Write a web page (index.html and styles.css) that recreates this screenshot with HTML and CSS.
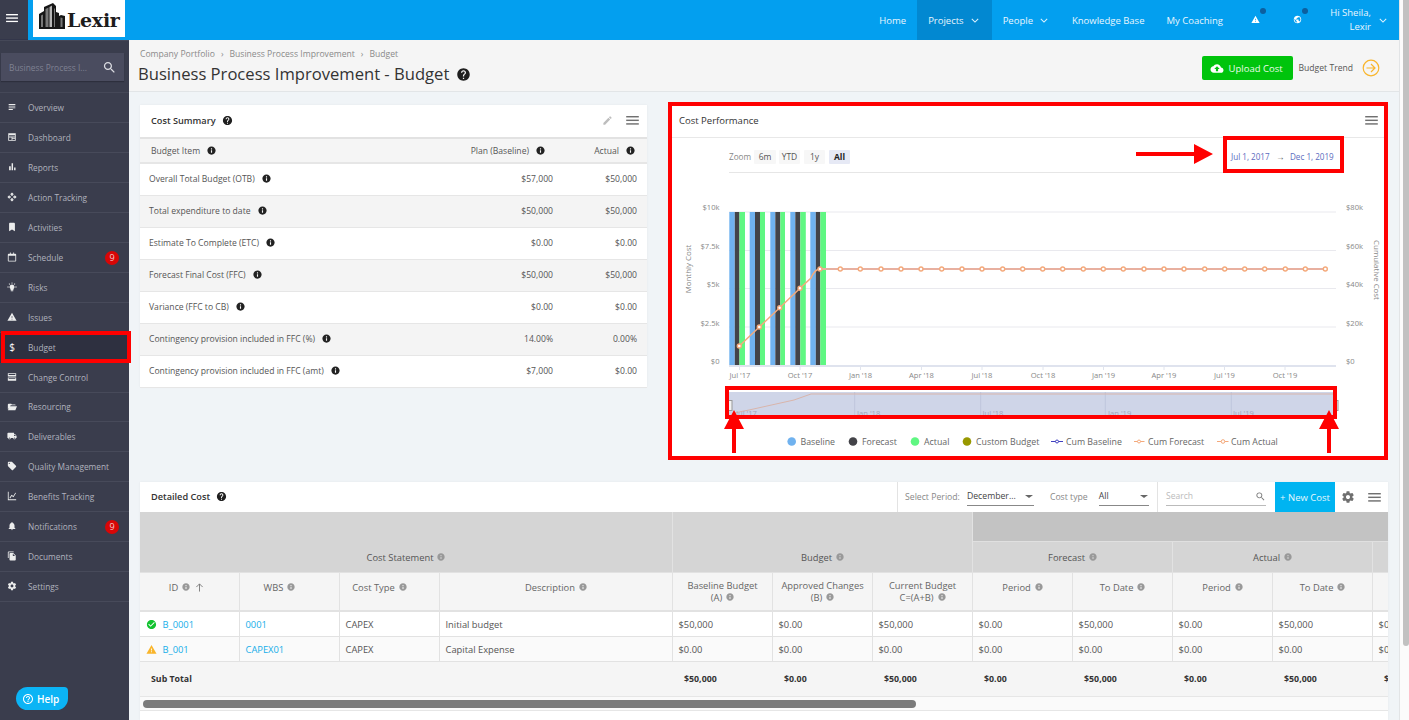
FILE: index.html
```html
<!DOCTYPE html>
<html lang="en">
<head>
<meta charset="utf-8">
<title>Business Process Improvement - Budget</title>
<link rel="stylesheet" href="styles.css">
</head>
<body>
<svg class="sprite" aria-hidden="true">
  <symbol id="i-menu" viewBox="0 0 14 10"><rect width="14" height="1.6" y="0"/><rect width="14" height="1.6" y="4"/><rect width="14" height="1.6" y="8"/></symbol>
  <symbol id="i-search" viewBox="0 0 24 24"><path d="M15.5 14h-.79l-.28-.27C15.41 12.59 16 11.11 16 9.5 16 5.91 13.09 3 9.5 3S3 5.91 3 9.5 5.91 16 9.5 16c1.61 0 3.09-.59 4.23-1.57l.27.28v.79l5 4.99L20.49 19l-4.99-5zm-6 0C7.01 14 5 11.99 5 9.5S7.01 5 9.5 5 14 7.01 14 9.5 11.99 14 9.5 14z"/></symbol>
  <symbol id="i-help" viewBox="0 0 24 24"><path d="M12 2C6.48 2 2 6.48 2 12s4.48 10 10 10 10-4.48 10-10S17.52 2 12 2zm1 17h-2v-2h2v2zm2.07-7.75l-.9.92C13.45 12.9 13 13.5 13 15h-2v-.5c0-1.1.45-2.1 1.17-2.83l1.24-1.26c.37-.36.59-.86.59-1.41 0-1.1-.9-2-2-2s-2 .9-2 2H8c0-2.21 1.79-4 4-4s4 1.79 4 4c0 .88-.36 1.68-.93 2.25z"/></symbol>
  <symbol id="i-help-o" viewBox="0 0 24 24"><path d="M11 18h2v-2h-2v2zm1-16C6.48 2 2 6.48 2 12s4.48 10 10 10 10-4.48 10-10S17.52 2 12 2zm0 18c-4.41 0-8-3.59-8-8s3.59-8 8-8 8 3.59 8 8-3.59 8-8 8zm0-14c-2.21 0-4 1.79-4 4h2c0-1.1.9-2 2-2s2 .9 2 2c0 2-3 1.75-3 5h2c0-2.25 3-2.5 3-5 0-2.21-1.79-4-4-4z"/></symbol>
  <symbol id="i-info" viewBox="0 0 24 24"><path d="M12 1C5.9 1 1 5.9 1 12s4.900 11 11 11 11-4.900 11-11S18.100 1 12 1zm1.500 17h-3v-7h3v7zm0-9h-3V6h3v3z"/></symbol>
  <symbol id="i-overview" viewBox="0 0 24 24"><path d="M14 17H4v2h10v-2zm6-8H4v2h16V9zM4 15h16v-2H4v2zM4 5v2h16V5H4z"/></symbol>
  <symbol id="i-dash" viewBox="0 0 24 24"><path d="M3 3h18v18H3V3zm2 5v3h14V8H5zm0 5v6h6v-6H5zm8 0v2h6v-2h-6zm0 4v2h6v-2h-6z" fill-rule="evenodd"/></symbol>
  <symbol id="i-bars" viewBox="0 0 24 24"><path d="M5 10h4v10H5zM11 3h3.500v17H11zM17 13h3.500v7H17z"/></symbol>
  <symbol id="i-move" viewBox="0 0 24 24"><path d="M10 9h4V6h3l-5-5-5 5h3v3zm-1 1H6V7l-5 5 5 5v-3h3v-4zm14 2l-5-5v3h-3v4h3v3l5-5zm-9 3h-4v3H7l5 5 5-5h-3v-3z"/></symbol>
  <symbol id="i-bookmark" viewBox="0 0 24 24"><path d="M17 2H7c-1.100 0-2 .9-2 2v18l7-4 7 4V4c0-1.100-.9-2-2-2z"/></symbol>
  <symbol id="i-cal" viewBox="0 0 24 24"><path d="M7 1h2v3h6V1h2v3h3c1 0 2 1 2 2v15c0 1-1 2-2 2H4c-1 0-2-1-2-2V6c0-1 1-2 2-2h3V1zM4 9v12h16V9H4z" fill-rule="evenodd"/></symbol>
  <symbol id="i-bulb" viewBox="0 0 24 24"><path d="M9 20h6v2H9zM11 1h2v3h-2zM1 11h3v2H1zM20 11h3v2h-3zM4 4.500L5.500 3l2.200 2.200-1.500 1.500zM16.300 5.200L18.500 3 20 4.500l-2.200 2.200zM12 6a6 6 0 0 1 3.500 10.900V19h-7v-2.100A6 6 0 0 1 12 6z"/></symbol>
  <symbol id="i-warn" viewBox="0 0 24 24"><path d="M1 21h22L12 2 1 21zm12-3h-2v-2h2v2zm0-4h-2v-4h2v4z"/></symbol>
  <symbol id="i-storage" viewBox="0 0 24 24"><path d="M2 3h20v8H2V3zm2 2v4h16V5H4zM2 13h20v8H2v-8zm2 2v4h16v-4H4zM4 9h16V7H4zM4 19h16v-2H4z" fill-rule="evenodd"/></symbol>
  <symbol id="i-folder" viewBox="0 0 24 24"><path d="M2 6c0-1.100.9-2 2-2h6l2 2h7c1.100 0 2 .9 2 2H9L2 18V6zM7 10h17l-4 10H2z"/></symbol>
  <symbol id="i-truck" viewBox="0 0 24 24"><path d="M20 8h-3V4H3c-1.100 0-2 .9-2 2v11h2c0 1.660 1.340 3 3 3s3-1.340 3-3h6c0 1.660 1.340 3 3 3s3-1.340 3-3h2v-5l-3-4zM6 18.500c-.83 0-1.500-.67-1.500-1.500s.67-1.500 1.500-1.500 1.500.67 1.500 1.500-.67 1.500-1.500 1.500zm13.500-9l1.960 2.500H17V9.500h2.500zm-1.500 9c-.83 0-1.500-.67-1.500-1.500s.67-1.500 1.500-1.500 1.500.67 1.500 1.500-.67 1.500-1.500 1.500z"/></symbol>
  <symbol id="i-tag" viewBox="0 0 24 24"><path d="M21.410 11.580l-9-9C12.050 2.220 11.550 2 11 2H4c-1.100 0-2 .9-2 2v7c0 .55.22 1.050.59 1.420l9 9c.36.36.86.58 1.410.58.55 0 1.050-.22 1.410-.59l7-7c.37-.36.59-.86.59-1.410 0-.55-.23-1.060-.59-1.420zM5.500 7C4.670 7 4 6.330 4 5.500S4.670 4 5.500 4 7 4.670 7 5.500 6.330 7 5.500 7z"/></symbol>
  <symbol id="i-trend" viewBox="0 0 24 24"><path d="M2 2h2v18h18v2H2V2zm4 14l5-7 4 3 5-8 1.700 1-6.200 10-4-3-4 6z"/></symbol>
  <symbol id="i-bell" viewBox="0 0 24 24"><path d="M12 22c1.100 0 2-.9 2-2h-4c0 1.100.9 2 2 2zm6-6v-5c0-3.070-1.630-5.640-4.500-6.320V4c0-.83-.67-1.500-1.500-1.500s-1.500.67-1.500 1.500v.68C7.640 5.360 6 7.920 6 11v5l-2 2v1h16v-1l-2-2z"/></symbol>
  <symbol id="i-docs" viewBox="0 0 24 24"><path d="M16 1H4c-1.100 0-2 .9-2 2v14h2V3h12V1zm-1 4l6 6v10c0 1.100-.9 2-2 2H7.990C6.890 23 6 22.100 6 21l.01-14c0-1.100.89-2 1.990-2h7zm-1 7h5.500L14 6.500V12z"/></symbol>
  <symbol id="i-gear" viewBox="0 0 24 24"><path d="M19.430 12.980c.04-.32.07-.64.07-.98s-.03-.66-.07-.98l2.110-1.650c.19-.15.24-.42.12-.64l-2-3.460c-.12-.22-.39-.3-.61-.22l-2.490 1c-.52-.4-1.080-.73-1.690-.98l-.38-2.650C14.460 2.180 14.250 2 14 2h-4c-.25 0-.46.18-.49.42l-.38 2.650c-.61.25-1.170.59-1.690.98l-2.490-1c-.23-.09-.49 0-.61.22l-2 3.460c-.13.22-.07.49.12.64l2.110 1.650c-.04.32-.07.65-.07.98s.03.66.07.98l-2.110 1.650c-.19.15-.24.42-.12.64l2 3.460c.12.22.39.3.61.22l2.490-1c.52.4 1.080.73 1.690.98l.38 2.650c.03.24.24.42.49.42h4c.25 0 .46-.18.49-.42l.38-2.650c.61-.25 1.170-.59 1.690-.98l2.490 1c.23.09.49 0 .61-.22l2-3.460c.12-.22.07-.49-.12-.64l-2.110-1.650zM12 15.500c-1.930 0-3.500-1.570-3.500-3.500s1.570-3.500 3.500-3.500 3.500 1.570 3.500 3.500-1.570 3.500-3.500 3.500z"/></symbol>
  <symbol id="i-globe" viewBox="0 0 24 24"><path d="M12 2C6.480 2 2 6.480 2 12s4.480 10 10 10 10-4.480 10-10S17.520 2 12 2zm-1 17.930c-3.950-.49-7-3.850-7-7.930 0-.62.08-1.210.21-1.790L9 15v1c0 1.100.9 2 2 2v1.930zm6.900-2.540c-.26-.81-1-1.390-1.900-1.390h-1v-3c0-.55-.45-1-1-1H8v-2h2c.55 0 1-.45 1-1V7h2c1.100 0 2-.9 2-2v-.41c2.930 1.190 5 4.060 5 7.410 0 2.080-.8 3.970-2.100 5.390z"/></symbol>
  <symbol id="i-cloud" viewBox="0 0 24 24"><path d="M19.350 10.040C18.670 6.590 15.640 4 12 4 9.110 4 6.600 5.640 5.350 8.040 2.340 8.360 0 10.910 0 14c0 3.310 2.690 6 6 6h13c2.760 0 5-2.240 5-5 0-2.640-2.050-4.780-4.650-4.960zM14 13v4h-4v-4H7l5-5 5 5h-3z"/></symbol>
  <symbol id="i-edit" viewBox="0 0 24 24"><path d="M3 17.250V21h3.750L17.810 9.940l-3.750-3.750L3 17.250zM20.710 7.040c.39-.39.39-1.020 0-1.410l-2.340-2.340c-.39-.39-1.020-.39-1.410 0l-1.830 1.830 3.750 3.750 1.830-1.830z"/></symbol>
  <symbol id="i-check" viewBox="0 0 24 24"><path d="M12 2C6.480 2 2 6.480 2 12s4.480 10 10 10 10-4.480 10-10S17.520 2 12 2zm-2 15l-5-5 1.410-1.410L10 14.170l7.590-7.590L19 8l-9 9z"/></symbol>
  <symbol id="i-chev" viewBox="0 0 10 6"><path d="M1 1l4 4 4-4" fill="none" stroke="currentColor" stroke-width="1.300"/></symbol>
  <symbol id="i-up" viewBox="0 0 10 10"><path d="M5 9.500V1M1.500 4.500L5 1l3.500 3.500" fill="none" stroke="currentColor" stroke-width="1"/></symbol>
</svg>

<div class="app">
  <div class="shell">
    <header class="topbar">
      <button class="burger" type="button" aria-label="Menu"><svg class="ic-burger"><use href="#i-menu"/></svg></button>
      <div class="logo">
        <svg class="logo-mark" viewBox="0 0 27 27" aria-hidden="true">
          <path class="lm-dark" d="M0 26V11l5-3V4l9-4 3 3v6l3 1v3l2-1 4 1v13z"/>
          <path class="lm-mid" d="M2 24V12.500l2-1V24zM6.500 24V6l3-1.500V24z"/>
          <path class="lm-light" d="M10.500 24V4l2.500-1.500V24z"/>
          <path class="lm-mid" d="M15 24V5l1 1v18zM21.500 24V14.500l2 .5v9z"/>
        </svg>
        <span class="logo-text">Lexir</span>
      </div>
      <nav class="topnav">
        <a class="tn">Home</a>
        <a class="tn tn-active">Projects<svg class="tn-chev"><use href="#i-chev"/></svg></a>
        <a class="tn tn-people">People<svg class="tn-chev"><use href="#i-chev"/></svg></a>
        <a class="tn">Knowledge Base</a>
        <a class="tn">My Coaching</a>
        <span class="tn-icon tn-icon-warn"><svg class="ic-top"><use href="#i-warn"/></svg><i class="dot"></i></span>
        <span class="tn-icon tn-icon-globe"><svg class="ic-top"><use href="#i-globe"/></svg><i class="dot"></i></span>
        <span class="user">Hi Sheila,<br>Lexir</span>
        <svg class="tn-chev user-chev"><use href="#i-chev"/></svg>
      </nav>
    </header>

    <div class="body">
      <aside class="sidebar">
        <div class="side-search">
          <div class="side-search-box"><span>Business Process I...</span><svg class="ic-side-search"><use href="#i-search"/></svg></div>
        </div>
        <ul class="side-nav">
          <li class="sn"><svg class="sn-ic"><use href="#i-overview"/></svg>Overview</li>
          <li class="sn"><svg class="sn-ic"><use href="#i-dash"/></svg>Dashboard</li>
          <li class="sn"><svg class="sn-ic"><use href="#i-bars"/></svg>Reports</li>
          <li class="sn"><svg class="sn-ic"><use href="#i-move"/></svg>Action Tracking</li>
          <li class="sn"><svg class="sn-ic"><use href="#i-bookmark"/></svg>Activities</li>
          <li class="sn"><svg class="sn-ic"><use href="#i-cal"/></svg>Schedule<span class="badge">9</span></li>
          <li class="sn"><svg class="sn-ic"><use href="#i-bulb"/></svg>Risks</li>
          <li class="sn"><svg class="sn-ic"><use href="#i-warn"/></svg>Issues</li>
          <li class="sn sn-active"><span class="sn-ic sn-dollar">$</span>Budget</li>
          <li class="sn"><svg class="sn-ic"><use href="#i-storage"/></svg>Change Control</li>
          <li class="sn sn-short"><svg class="sn-ic"><use href="#i-folder"/></svg>Resourcing</li>
          <li class="sn"><svg class="sn-ic"><use href="#i-truck"/></svg>Deliverables</li>
          <li class="sn"><svg class="sn-ic"><use href="#i-tag"/></svg>Quality Management</li>
          <li class="sn"><svg class="sn-ic"><use href="#i-trend"/></svg>Benefits Tracking</li>
          <li class="sn"><svg class="sn-ic"><use href="#i-bell"/></svg>Notifications<span class="badge">9</span></li>
          <li class="sn"><svg class="sn-ic"><use href="#i-docs"/></svg>Documents</li>
          <li class="sn"><svg class="sn-ic"><use href="#i-gear"/></svg>Settings</li>
        </ul>
        <button class="help" type="button"><svg class="ic-help"><use href="#i-help-o"/></svg>Help</button>
      </aside>

      <main class="main">
        <div class="pagebar">
          <div class="pagebar-left">
            <div class="crumbs"><span>Company Portfolio</span><b>›</b><span>Business Process Improvement</span><b>›</b><span>Budget</span></div>
            <h1 class="title">Business Process Improvement - Budget<svg class="ic-title"><use href="#i-help"/></svg></h1>
          </div>
          <div class="pagebar-right">
            <button class="upload" type="button"><svg class="ic-cloud"><use href="#i-cloud"/></svg>Upload Cost</button>
            <span class="trend">Budget Trend</span>
            <svg class="trend-arrow" viewBox="0 0 18 18"><circle cx="9" cy="9" r="7.800"/><path d="M4.500 9h8M9 5l4 4-4 4"/></svg>
          </div>
        </div>

        <div class="content">
          <div class="row-top">
            <section class="panel summary">
              <div class="panel-head">
                <span class="panel-title">Cost Summary</span><svg class="ic-q"><use href="#i-help"/></svg>
                <span class="spacer"></span>
                <svg class="ic-edit"><use href="#i-edit"/></svg>
                <svg class="ic-hamb"><use href="#i-menu"/></svg>
              </div>
              <table class="sum-table">
                <thead>
                  <tr><th class="sl">Budget Item<svg class="inf"><use href="#i-info"/></svg></th><th class="sr sr-plan">Plan (Baseline)<svg class="inf"><use href="#i-info"/></svg></th><th class="sr">Actual<svg class="inf"><use href="#i-info"/></svg></th></tr>
                </thead>
                <tbody>
                  <tr><td>Overall Total Budget (OTB)<svg class="inf"><use href="#i-info"/></svg></td><td class="num">$57,000</td><td class="num">$50,000</td></tr>
                  <tr><td>Total expenditure to date<svg class="inf"><use href="#i-info"/></svg></td><td class="num">$50,000</td><td class="num">$50,000</td></tr>
                  <tr><td>Estimate To Complete (ETC)<svg class="inf"><use href="#i-info"/></svg></td><td class="num">$0.00</td><td class="num">$0.00</td></tr>
                  <tr><td>Forecast Final Cost (FFC)<svg class="inf"><use href="#i-info"/></svg></td><td class="num">$50,000</td><td class="num">$50,000</td></tr>
                  <tr><td>Variance (FFC to CB)<svg class="inf"><use href="#i-info"/></svg></td><td class="num">$0.00</td><td class="num">$0.00</td></tr>
                  <tr><td>Contingency provision included in FFC (%)<svg class="inf"><use href="#i-info"/></svg></td><td class="num">14.00%</td><td class="num">0.00%</td></tr>
                  <tr><td>Contingency provision included in FFC (amt)<svg class="inf"><use href="#i-info"/></svg></td><td class="num">$7,000</td><td class="num">$0.00</td></tr>
                </tbody>
              </table>
            </section>

            <section class="panel perf">
              <div class="panel-head perf-head">
                <span class="panel-title perf-title">Cost Performance</span>
                <span class="spacer"></span>
                <svg class="ic-hamb"><use href="#i-menu"/></svg>
              </div>
              <svg class="chart" viewBox="673 138 712 318" width="712" height="318">
                <!-- range selector -->
                <text class="cx-zoom" x="730" y="160">Zoom</text>
                <rect class="rs" x="755" y="150" width="22" height="14" rx="1"/><text class="rs-t" x="766" y="160">6m</text>
                <rect class="rs" x="780" y="150" width="21" height="14" rx="1"/><text class="rs-t" x="790.500" y="160">YTD</text>
                <rect class="rs" x="805" y="150" width="21" height="14" rx="1"/><text class="rs-t" x="815.500" y="160">1y</text>
                <rect class="rs rs-on" x="830" y="150" width="21" height="14" rx="1"/><text class="rs-t rs-t-on" x="840.500" y="160">All</text>
                <line class="hr" x1="730" x2="1337" y1="172.500" y2="172.500"/>
                <text class="cx-date" x="1232" y="160">Jul 1, 2017</text>
                <text class="cx-arrow" x="1277" y="160">→</text>
                <text class="cx-date" x="1291" y="160">Dec 1, 2019</text>

                <!-- grid -->
                <g class="grid">
                  <line x1="730" x2="1337" y1="212" y2="212"/>
                  <line x1="730" x2="1337" y1="250.500" y2="250.500"/>
                  <line x1="730" x2="1337" y1="288.500" y2="288.500"/>
                  <line x1="730" x2="1337" y1="327" y2="327"/>
                </g>

                <!-- bars -->
                <g class="b-base"><rect x="730.300" y="212" width="5.500" height="154"/><rect x="750.700" y="212" width="5.300" height="154"/><rect x="771.300" y="212" width="5" height="154"/><rect x="791.300" y="212" width="5" height="154"/><rect x="811.300" y="212" width="5.500" height="154"/></g>
                <g class="b-fore"><rect x="735.800" y="212" width="4.700" height="154"/><rect x="756" y="212" width="5" height="154"/><rect x="776.300" y="212" width="5" height="154"/><rect x="796.300" y="212" width="5" height="154"/><rect x="816.800" y="212" width="4.500" height="154"/></g>
                <g class="b-act"><rect x="740.500" y="212" width="5.500" height="154"/><rect x="761" y="212" width="5" height="154"/><rect x="781.300" y="212" width="4.700" height="154"/><rect x="801.300" y="212" width="5.500" height="154"/><rect x="821.300" y="212" width="5.700" height="154"/></g>

                <line class="axis-line" x1="730" x2="1337" y1="366" y2="366"/>
                <g class="ticks">
                  <line x1="740.500" x2="740.500" y1="366" y2="370"/><line x1="801" x2="801" y1="366" y2="370"/><line x1="861.500" x2="861.500" y1="366" y2="370"/><line x1="922.500" x2="922.500" y1="366" y2="370"/><line x1="983" x2="983" y1="366" y2="370"/><line x1="1044" x2="1044" y1="366" y2="370"/><line x1="1104.500" x2="1104.500" y1="366" y2="370"/><line x1="1165" x2="1165" y1="366" y2="370"/><line x1="1225.500" x2="1225.500" y1="366" y2="370"/><line x1="1286" x2="1286" y1="366" y2="370"/>
                </g>

                <!-- lines -->
                <path class="l-cum" d="M740.300 346L760.300 327L780.700 307.700L801 288.300L812 278Q816 269 821 269H1326.300"/>
                <path class="l-flat" d="M821 269H1326.300"/>
                <g class="pts">
                  <circle cx="740.300" cy="346" r="2"/><circle cx="760.300" cy="327" r="2"/><circle cx="780.700" cy="307.700" r="2"/><circle cx="801" cy="288.300" r="2"/><circle cx="821" cy="269" r="2"/><circle cx="841.300" cy="269" r="2"/><circle cx="861.300" cy="269" r="2"/><circle cx="882" cy="269" r="2"/><circle cx="902" cy="269" r="2"/><circle cx="922" cy="269" r="2"/><circle cx="942.700" cy="269" r="2"/><circle cx="963" cy="269" r="2"/><circle cx="983" cy="269" r="2"/><circle cx="1003.700" cy="269" r="2"/><circle cx="1023.700" cy="269" r="2"/><circle cx="1043.700" cy="269" r="2"/><circle cx="1063.700" cy="269" r="2"/><circle cx="1084.300" cy="269" r="2"/><circle cx="1104.300" cy="269" r="2"/><circle cx="1124.300" cy="269" r="2"/><circle cx="1145" cy="269" r="2"/><circle cx="1165" cy="269" r="2"/><circle cx="1185" cy="269" r="2"/><circle cx="1205.700" cy="269" r="2"/><circle cx="1225.700" cy="269" r="2"/><circle cx="1245.700" cy="269" r="2"/><circle cx="1265.700" cy="269" r="2"/><circle cx="1286.300" cy="269" r="2"/><circle cx="1306.300" cy="269" r="2"/><circle cx="1326.300" cy="269" r="2"/>
                </g>

                <!-- axis labels -->
                <g class="ax ax-end">
                  <text x="720.500" y="210">$10k</text><text x="720.500" y="249">$7.5k</text><text x="720.500" y="287">$5k</text><text x="720.500" y="326">$2.5k</text><text x="720.500" y="364">$0</text>
                </g>
                <g class="ax">
                  <text x="1347" y="210">$80k</text><text x="1347" y="249">$60k</text><text x="1347" y="287">$40k</text><text x="1347" y="326">$20k</text><text x="1347" y="364">$0</text>
                </g>
                <g class="ax ax-mid">
                  <text x="741" y="378">Jul '17</text><text x="801" y="378">Oct '17</text><text x="861.500" y="378">Jan '18</text><text x="922.500" y="378">Apr '18</text><text x="983" y="378">Jul '18</text><text x="1044" y="378">Oct '18</text><text x="1104.500" y="378">Jan '19</text><text x="1165" y="378">Apr '19</text><text x="1225.500" y="378">Jul '19</text><text x="1286" y="378">Oct '19</text>
                </g>
                <text class="ax-title" transform="translate(691.500 269) rotate(-90)">Monthly Cost</text>
                <text class="ax-title" transform="translate(1375 270) rotate(90)">Cumulative Cost</text>

                <!-- navigator -->
                <rect class="nav-bg" x="730" y="392" width="607" height="25"/>
                <g class="nav-grid"><line x1="855.700" x2="855.700" y1="392" y2="417"/><line x1="981.700" x2="981.700" y1="392" y2="417"/><line x1="1106.300" x2="1106.300" y1="392" y2="417"/><line x1="1232.300" x2="1232.300" y1="392" y2="417"/></g>
                <path class="nav-line" d="M735 413L750 410L795 400L812 394H1337"/>
                <g class="ax nav-t"><text x="737" y="416">Jul '17</text><text x="858" y="416">Jan '18</text><text x="983.500" y="416">Jul '18</text><text x="1109" y="416">Jan '19</text><text x="1234" y="416">Jul '19</text></g>
                <rect class="nav-h" x="729.500" y="400.500" width="3.500" height="10"/>
                <rect class="nav-h" x="1335.500" y="400.500" width="3.500" height="10"/>

                <!-- legend -->
                <circle class="lg-base" cx="792.700" cy="441.500" r="4.300"/><text class="lg" x="801.500" y="445">Baseline</text>
                <circle class="lg-fore" cx="854" cy="441.500" r="4.300"/><text class="lg" x="863" y="445">Forecast</text>
                <circle class="lg-act" cx="916" cy="441.500" r="4.300"/><text class="lg" x="925" y="445">Actual</text>
                <circle class="lg-cust" cx="968" cy="441.500" r="4.300"/><text class="lg" x="977" y="445">Custom Budget</text>
                <line class="ll-blue" x1="1052" x2="1064" y1="441.500" y2="441.500"/><circle class="lm-blue" cx="1058" cy="441.500" r="1.500"/><text class="lg" x="1067" y="445">Cum Baseline</text>
                <line class="ll-org" x1="1135" x2="1145.500" y1="441.500" y2="441.500"/><circle class="lm-org" cx="1140" cy="441.500" r="1.500"/><text class="lg" x="1149" y="445">Cum Forecast</text>
                <line class="ll-org" x1="1218" x2="1229.500" y1="441.500" y2="441.500"/><circle class="lm-org" cx="1224" cy="441.500" r="1.800"/><text class="lg" x="1232" y="445">Cum Actual</text>

                <!-- annotations -->
                <g class="anno">
                  <rect x="1226" y="138" width="117" height="33"/>
                  <rect x="728" y="388" width="608" height="29"/>
                </g>
                <g class="anno-fill">
                  <path d="M1137 152h58v-8l19 10-19 10v-8h-58z"/>
                  <path d="M735 410l10 19h-8v24h-4v-24h-8z"/>
                  <path d="M1330 410l10 19h-8v24h-4v-24h-8z"/>
                </g>
              </svg>
            </section>
          </div>

          <section class="panel detail">
            <div class="detail-bar">
              <span class="panel-title detail-title">Detailed Cost</span><svg class="ic-q"><use href="#i-help"/></svg>
              <span class="spacer"></span>
              <div class="filters">
                <span class="f-label">Select Period:</span>
                <span class="f-select f-period">December...<i class="caret"></i></span>
                <span class="f-label f-label-2">Cost type</span>
                <span class="f-select f-type">All<i class="caret"></i></span>
              </div>
              <div class="d-search"><span class="d-search-in">Search<svg class="ic-d-search"><use href="#i-search"/></svg></span></div>
              <button class="newcost" type="button">+ New Cost</button>
              <svg class="ic-gear"><use href="#i-gear"/></svg>
              <svg class="ic-hamb ic-hamb-d"><use href="#i-menu"/></svg>
            </div>
            <div class="table-clip">
              <table class="dt">
                <colgroup>
                  <col class="c100"><col class="c100"><col class="c100"><col class="c233"><col class="c100"><col class="c100"><col class="c100"><col class="c100"><col class="c100"><col class="c100"><col class="c100"><col class="c100">
                </colgroup>
                <thead>
                  <tr class="h-a">
                    <th colspan="4" rowspan="2" class="g">Cost Statement<svg class="gi"><use href="#i-info"/></svg></th>
                    <th colspan="3" rowspan="2" class="g">Budget<svg class="gi"><use href="#i-info"/></svg></th>
                    <th colspan="5" class="band"></th>
                  </tr>
                  <tr class="h-b">
                    <th colspan="2" class="g2">Forecast<svg class="gi"><use href="#i-info"/></svg></th>
                    <th colspan="2" class="g2">Actual<svg class="gi"><use href="#i-info"/></svg></th>
                    <th class="g2"></th>
                  </tr>
                  <tr class="h-c">
                    <th class="th-id">ID<svg class="gi"><use href="#i-info"/></svg><svg class="ic-up"><use href="#i-up"/></svg></th>
                    <th class="th-off">WBS<svg class="gi"><use href="#i-info"/></svg></th>
                    <th class="th-off">Cost Type<svg class="gi"><use href="#i-info"/></svg></th>
                    <th>Description<svg class="gi"><use href="#i-info"/></svg></th>
                    <th class="two">Baseline Budget<br>(A)<svg class="gi"><use href="#i-info"/></svg></th>
                    <th class="two">Approved Changes<br>(B)<svg class="gi"><use href="#i-info"/></svg></th>
                    <th class="two">Current Budget<br>C=(A+B)<svg class="gi"><use href="#i-info"/></svg></th>
                    <th>Period<svg class="gi"><use href="#i-info"/></svg></th>
                    <th>To Date<svg class="gi"><use href="#i-info"/></svg></th>
                    <th>Period<svg class="gi"><use href="#i-info"/></svg></th>
                    <th>To Date<svg class="gi"><use href="#i-info"/></svg></th>
                    <th></th>
                  </tr>
                </thead>
                <tbody>
                  <tr class="r">
                    <td class="idc"><svg class="st st-ok"><use href="#i-check"/></svg><a class="lnk">B_0001</a></td><td><a class="lnk">0001</a></td><td>CAPEX</td><td>Initial budget</td><td>$50,000</td><td>$0.00</td><td>$50,000</td><td>$0.00</td><td>$50,000</td><td>$0.00</td><td>$50,000</td><td>$0.00</td>
                  </tr>
                  <tr class="r r2">
                    <td class="idc"><svg class="st st-warn"><use href="#i-warn"/></svg><a class="lnk">B_001</a></td><td><a class="lnk">CAPEX01</a></td><td>CAPEX</td><td>Capital Expense</td><td>$0.00</td><td>$0.00</td><td>$0.00</td><td>$0.00</td><td>$0.00</td><td>$0.00</td><td>$0.00</td><td>$0.00</td>
                  </tr>
                </tbody>
                <tfoot>
                  <tr class="sub">
                    <td colspan="4">Sub Total</td><td>$50,000</td><td>$0.00</td><td>$50,000</td><td>$0.00</td><td>$50,000</td><td>$0.00</td><td>$50,000</td><td>$0.00</td>
                  </tr>
                </tfoot>
              </table>
            </div>
            <div class="hscroll"><div class="hthumb"></div></div>
          </section>
        </div>
      </main>
    </div>
  </div>
  <div class="rail"><div class="rail-thumb"></div></div>
</div>
</body>
</html>
```
FILE: styles.css
```css
* { box-sizing: border-box; }
html, body { margin: 0; height: 720px; overflow: hidden; }
body { font-family: "Open Sans", "Liberation Sans", sans-serif; font-size: 9.35px; color: #555; background: #fff; }
svg { fill: currentColor; }
.sprite { display: none; }
ul { margin: 0; padding: 0; list-style: none; }
button { font-family: inherit; border: 0; padding: 0; cursor: pointer; }
a { color: inherit; text-decoration: none; }

.app { display: flex; width: 1409px; height: 720px; }
.shell { width: 1400px; height: 720px; display: flex; flex-direction: column; border-right: 1px solid #e2e4e6; }
.rail { width: 9px; padding-left: 3px; background: #fbfbfb; }
.rail-thumb { width: 6px; height: 646px; background: #c1c1c1; border-radius: 0 0 3px 3px; }

/* top bar */
.topbar { height: 40px; flex: none; display: flex; background: #039fef; color: #e9f6fe; }
.burger { width: 28px; height: 40px; background: #3a3d4d; color: #fff; display: flex; align-items: flex-start; padding: 14px 0 0 6px; border-bottom: 1px solid #33364a; }
.ic-burger { width: 12px; height: 8.500px; }
.logo { margin-left: 5px; width: 92px; height: 37px; background: #fff; display: flex; align-items: flex-start; padding: 3px 0 0 6px; }
.logo-mark { width: 27px; height: 27px; flex: none; }
.lm-dark { fill: #161616; }
.lm-mid { fill: #777; }
.lm-light { fill: #b5b5b5; }
.logo-text { font-family: "DejaVu Serif", serif; font-weight: 700; font-size: 19px; line-height: 20px; margin: 7px 0 0 1px; color: #1d1d1d; letter-spacing: -.3px; }
.topnav { margin-left: auto; display: flex; align-items: center; height: 40px; font-size: 9.5px; }
.tn { display: flex; align-items: center; height: 40px; padding: 0 11px; }
.tn-active { background: #0288d1; padding-right: 13px; }
.tn-people { padding-right: 13px; }
.tn-chev { width: 8px; height: 5px; margin-left: 7px; color: #dff2fd; }
.tn-icon { position: relative; display: block; width: 9px; height: 9px; margin-top: -1px; }
.tn-icon-warn { margin-left: 17px; }
.tn-icon-globe { margin-left: 33px; }
.ic-top { display: block; width: 9px; height: 9px; color: #fff; }
.dot { position: absolute; right: -6px; top: -7px; width: 6px; height: 6px; background: #0c5f9f; border-radius: 50%; }
.user { width: 50px; margin-left: 19px; text-align: right; line-height: 14px; }
.user-chev { margin: 0 12px 0 8px; flex: none; }

/* layout */
.body { flex: 1; display: flex; min-height: 0; }

/* sidebar */
.sidebar { position: relative; width: 129px; flex: none; background: #3a3d4d; color: #b1b3be; font-size: 8.3px; }
.side-search { height: 53px; padding: 12px 5px 0 1px; border-top: 1px solid #454858; border-bottom: 1px solid #454858; font-size: 8.4px; }
.side-search-box { height: 28px; background: #4a4c5f; display: flex; align-items: center; justify-content: space-between; padding: 0 7px 0 8px; box-shadow: 0 1px 1px #2d2f3d; color: #7f8192; }
.ic-side-search { width: 15px; height: 15px; color: #dcdde2; }
.sn { position: relative; display: flex; align-items: center; height: 30px; padding: 0 0 1px 7px; border-bottom: 1px solid #474a5a; }
.sn-short { height: 29px; }
.sn-ic { width: 10px; height: 10px; margin-right: 11px; color: #eceded; flex: none; }
.sn-dollar { color: #fff; text-align: center; line-height: 10px; font-size: 10px; }
.sn-active { background: #2e3040; border-bottom-color: #2e3040; }
.sn-active::after { content: ""; position: absolute; left: 1px; right: -2px; top: -2px; bottom: -1px; border: 4px solid #ff0000; z-index: 3; }
.badge { position: absolute; left: 105px; top: 8px; width: 14px; height: 14px; border-radius: 50%; background: #d80606; color: #f5c5c5; font-size: 9px; line-height: 14px; text-align: center; }
.help { position: absolute; left: 16px; top: 647px; width: 52px; height: 23px; background: #0bb4f5; color: #fff; font-weight: 600; font-size: 10px; border-radius: 12px 4px 12px 12px; display: flex; align-items: center; padding-left: 6px; }
.ic-help { width: 12px; height: 12px; margin-right: 3px; }

/* page bar */
.main { flex: 1; min-width: 0; display: flex; flex-direction: column; background: #f0f4f7; }
.pagebar { height: 52px; flex: none; background: #f5f5f5; border-bottom: 1px solid #e2e5e7; display: flex; justify-content: space-between; padding: 0 19px 0 9px; }
.crumbs { margin: 8px 0 0 2px; color: #8a8a8a; font-size: 8.6px; line-height: 12px; display: flex; }
.crumbs b { font-weight: 400; margin: 0 6px; }
.title { margin: 3px 0 0; font-weight: 400; font-size: 16.6px; line-height: 22px; color: #333; display: flex; align-items: center; }
.ic-title { width: 15px; height: 15px; margin-left: 7px; color: #1f1f1f; }
.pagebar-right { display: flex; align-items: center; padding-top: 5px; }
.upload { width: 91px; height: 24px; background: #00c40c; color: #eafbea; font-size: 9.5px; border-radius: 2px; display: flex; align-items: center; padding-left: 8px; }
.ic-cloud { width: 14px; height: 13px; margin-right: 5px; color: #fff; }
.trend { margin-left: 6px; font-size: 8.6px; color: #555; }
.trend-arrow { width: 18px; height: 18px; margin-left: 9px; fill: none; stroke: #f9b52b; stroke-width: 1.200; }

/* content */
.content { flex: 1; padding: 13px 11px 0 11px; min-height: 0; display: flex; flex-direction: column; }
.row-top { display: flex; align-items: flex-start; gap: 21px; flex: none; }
.panel { background: #fff; box-shadow: 0 0 2px rgba(0,0,0,.06); }
.panel-head { height: 32px; display: flex; align-items: center; padding: 0 8px 1px 11px; }
.panel-title { font-size: 9.2px; font-weight: 600; color: #333; }
.spacer { flex: 1; }
.ic-q { width: 11px; height: 11px; margin-left: 6px; color: #1f1f1f; }
.ic-edit { width: 11px; height: 11px; margin-right: 13px; color: #bdbdbd; }
.ic-hamb { width: 13px; height: 9px; color: #707070; }

/* summary */
.summary { width: 508px; height: 282px; }
.sum-table { width: 100%; border-collapse: collapse; table-layout: fixed; color: #555; font-size: 8.6px; }
.sum-table th { height: 25px; background: #f5f5f5; border-top: 2px solid #e2e2e2; border-bottom: 2px solid #e6e6e6; font-weight: 400; padding: 0; color: #555; }
.sum-table .sl { text-align: left; padding-left: 11px; }
.sum-table .sr { text-align: right; padding-right: 12px; width: 84px; }
.sum-table .sr-plan { width: auto; padding-right: 18px; }
.sum-table td { height: 32px; padding: 0 0 1px 9px; border-bottom: 1px solid #e6e6e6; }
.sum-table tbody tr:nth-child(even) td { background: #f4f4f4; }
.sum-table td.num { text-align: right; padding: 0 10px 1px 0; }
.sum-table th:nth-child(2) { width: 150px; }
.sum-table th:nth-child(1) { width: auto; }
.inf { width: 9px; height: 9px; margin-left: 7px; vertical-align: -1.500px; color: #222; }

/* performance */
.perf { width: 720px; height: 358px; margin-top: -3px; border: 4px solid #ff0000; box-shadow: none; }
.perf-head { height: 32px; border-bottom: 1px solid #e8e8e8; padding: 0 6px 2px 7px; }
.perf-title { font-size: 9.5px; font-weight: 400; color: #333; }
.chart { display: block; overflow: visible; font-family: "Open Sans", "Liberation Sans", sans-serif; }
.cx-zoom { font-size: 8.2px; fill: #888; }
.rs { fill: #f7f7f7; }
.rs-on { fill: #e6e9f5; }
.rs-t { font-size: 8.5px; fill: #555; text-anchor: middle; }
.rs-t-on { fill: #222; font-weight: 700; }
.hr { stroke: #e6e6e6; stroke-width: 1; }
.cx-date { font-size: 8.1px; fill: #5b6cc0; }
.cx-arrow { font-size: 8.5px; fill: #666; }
.grid line { stroke: #e9e9ee; stroke-width: 1; }
.b-base { fill: #70b2ef; }
.b-fore { fill: #434348; }
.b-act { fill: #5ff782; }
.axis-line { stroke: #dfe3ee; stroke-width: 2; }
.ticks line { stroke: #e0e4ee; stroke-width: 1; }
.l-cum { fill: none; stroke: #f4a97b; stroke-width: 1.500; }
.l-flat { fill: none; stroke: #e8b0a0; stroke-width: 2; }
.pts circle { fill: #fff; stroke: #f4a97b; stroke-width: 1.400; }
.ax { font-size: 7.6px; fill: #888; }
.ax-end { text-anchor: end; }
.ax-mid { text-anchor: middle; }
.ax-title { font-size: 7.9px; fill: #888; text-anchor: middle; }
.nav-bg { fill: #cfd5e8; }
.nav-grid line { stroke: #bfc6dc; stroke-width: 1; }
.nav-line { fill: none; stroke: #d9b5ab; stroke-width: 1; }
.nav-t { fill: #a0a6bb; }
.nav-h { fill: #f2f2f2; stroke: #999; stroke-width: 1; }
.lg { font-size: 8.8px; fill: #666; }
.lg-base { fill: #70b2ef; }
.lg-fore { fill: #434348; }
.lg-act { fill: #5ff782; }
.lg-cust { fill: #989800; }
.ll-blue { stroke: #4040c0; stroke-width: 1; }
.lm-blue { fill: #fff; stroke: #4040c0; }
.ll-org { stroke: #f4a97b; stroke-width: 1; }
.lm-org { fill: #fff; stroke: #f4a97b; }
.anno rect { fill: none; stroke: #ff0000; stroke-width: 4; }
.anno-fill { fill: #ff0000; }

/* detail */
.detail { flex: 1; margin-top: 22px; min-height: 0; width: 1248px; overflow: hidden; }
.detail-bar { height: 30px; display: flex; align-items: center; padding-left: 11px; }
.detail-title { color: #333; font-size: 9.2px; margin-bottom: 2px; }
.detail-bar .ic-q { margin-bottom: 2px; }
.filters { height: 30px; width: 261px; display: flex; align-items: center; border-left: 1px solid #e3e3e3; border-right: 1px solid #e3e3e3; padding-left: 7px; }
.f-label { color: #888; font-size: 8.7px; }
.f-label-2 { margin-left: 16px; }
.f-select { position: relative; height: 17px; line-height: 14px; border-bottom: 1px solid #888; color: #444; font-size: 8.7px; display: block; }
.f-period { width: 67px; margin-left: 7px; }
.f-type { width: 50px; margin-left: 11px; }
.caret { position: absolute; right: 1px; top: 6px; border-left: 4px solid transparent; border-right: 4px solid transparent; border-top: 3.500px solid #666; }
.d-search { width: 117px; height: 30px; display: flex; align-items: center; padding-left: 8px; }
.d-search-in { position: relative; width: 100px; height: 17px; line-height: 14px; border-bottom: 1px solid #bbb; color: #bbb; font-size: 8.5px; display: block; }
.ic-d-search { position: absolute; right: 0; top: 2px; width: 11px; height: 11px; color: #777; }
.newcost { width: 60px; height: 30px; background: #00b4f1; color: #e5f8fe; font-size: 9.5px; }
.ic-gear { width: 14px; height: 14px; margin-left: 6px; color: #6f6f6f; }
.ic-hamb-d { margin: 0 7px 0 13px; width: 13px; }

.table-clip { width: 1248px; overflow: hidden; }
.dt { width: 1333px; border-collapse: separate; border-spacing: 0; table-layout: fixed; color: #555; }
.c100 { width: 100px; }
.c233 { width: 233px; }
.dt th { font-weight: 400; padding: 0; text-align: center; color: #555; }
.g { background: #d5d5d5; vertical-align: bottom; padding-bottom: 8px !important; border-right: 1px solid #e2e2e2; }
.band { background: #c3c3c3; height: 30px; border-bottom: 1px solid #e0e0e0; }
.g2 { background: #d5d5d5; height: 30px; border-right: 1px solid #e2e2e2; }
.h-a { height: 30px; }
.h-b { height: 30px; }
.dt .h-c th { height: 40px; background: #f5f5f5; border-top: 1px solid #e2e2e2; border-bottom: 2px solid #e2e2e2; border-right: 1px solid #e2e2e2; vertical-align: top; padding-top: 9px; line-height: 12px; color: #666; }
.dt .h-c th.two { padding-top: 7px; line-height: 11.5px; }
.dt .h-c th.th-off { padding-right: 20px; }
.dt .h-c th.th-id { padding-right: 6px; }
.gi { width: 8px; height: 8px; margin-left: 4px; color: #999; vertical-align: 0; }
.ic-up { width: 9px; height: 9px; margin-left: 5px; color: #777; vertical-align: -1px; }
.r td { height: 25px; padding: 0 0 0 5.500px; border-right: 1px solid #e2e2e2; border-bottom: 1px solid #e2e2e2; white-space: nowrap; overflow: hidden; color: #555; }
.r2 td { background: #fafafa; }
.st { width: 11px; height: 11px; vertical-align: -2.500px; margin-right: 6px; }
.st-ok { color: #12c22f; }
.st-warn { color: #f9b52b; }
.lnk { color: #15aee9; }
.sub td { height: 35px; background: #f5f5f5; font-weight: 700; color: #333; font-size: 8.8px; padding: 0 0 0 11px; border-bottom: 1px solid #e6e6e6; white-space: nowrap; }
.hscroll { height: 14px; background: #fafafa; padding: 3px 0 0 3px; border-bottom: 1px solid #e6e6e6; }
.hthumb { width: 773px; height: 8px; background: #7b7b7b; border-radius: 4px; }
```
